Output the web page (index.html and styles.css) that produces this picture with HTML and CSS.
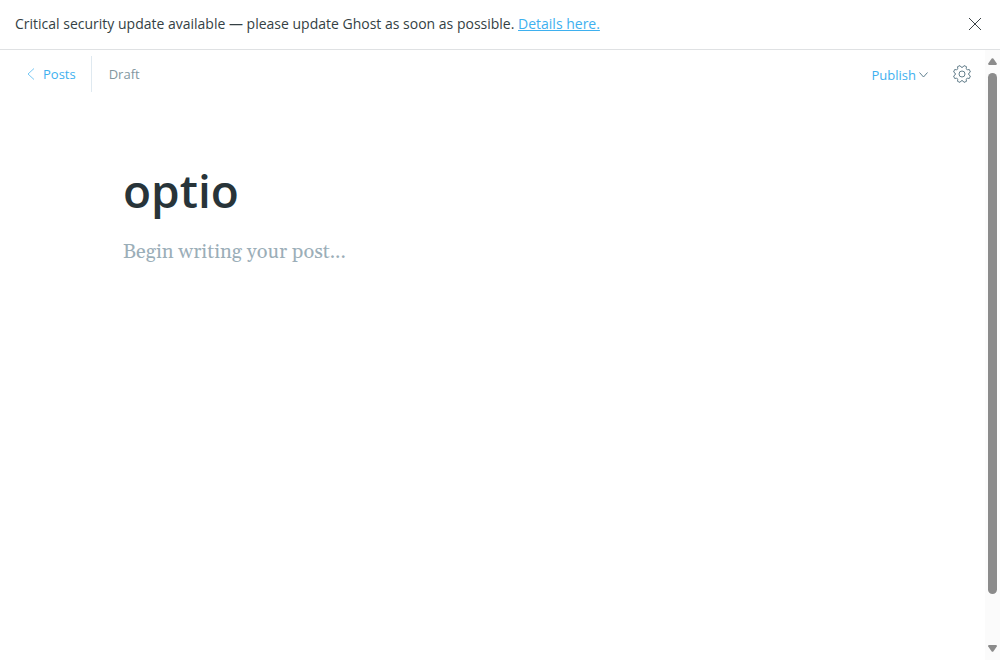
FILE: index.html
```html
<!DOCTYPE html>
<html lang="en">
<head>
  <meta charset="utf-8">
  <title>Ghost editor</title>
  <link rel="stylesheet" href="styles.css">
</head>
<body>
  <aside class="alert">
    <p class="alert-text">Critical security update available — please update Ghost as soon as possible. <a class="alert-link" href="#">Details here.</a></p>
    <button class="icon-button" type="button" aria-label="Close">
      <svg width="14" height="14" viewBox="0 0 14 14" fill="none" stroke="#3c4347"><path d="M1 1l12 12M13 1L1 13"/></svg>
    </button>
  </aside>
  <div class="viewport">
    <main class="editor">
      <header class="toolbar">
        <a class="back" href="#">
          <svg width="8" height="12" viewBox="0 0 8 12" fill="none" stroke="#3eb0ef" stroke-width=".7"><path d="M7 .5L1 6l6 5.500"/></svg>
          Posts
        </a>
        <span class="status">Draft</span>
        <button class="publish" type="button">
          Publish
          <svg width="9" height="6" viewBox="0 0 9 6" fill="none" stroke="#4f7385" stroke-width=".9"><path d="M.5 .5l4 4.500 4-4.500"/></svg>
        </button>
        <button class="icon-button" type="button" aria-label="Settings">
          <svg width="18" height="18" viewBox="0 0 18 18" fill="none" stroke="#54717f" stroke-width=".9" stroke-linejoin="round"><circle cx="9" cy="9" r="3"/><path d="M11 .6L13.500 1.700Q12.300 5.700 16.300 4.500L17.400 7Q13.700 9 17.400 11L16.300 13.500Q12.300 12.300 13.500 16.300L11 17.400Q9 13.700 7 17.400L4.500 16.300Q5.700 12.300 1.700 13.500L.6 11Q4.300 9 .6 7L1.700 4.500Q5.700 5.700 4.500 1.700L7 .6Q9 4.300 11 .6Z"/></svg>
        </button>
      </header>
      <form class="post">
        <input class="post-title" type="text" aria-label="Post title" value="optio">
        <textarea class="post-body" aria-label="Post body" placeholder="Begin writing your post..."></textarea>
      </form>
    </main>
    <div class="scrollbar" aria-hidden="true">
      <svg width="9" height="7" viewBox="0 0 9 7" fill="#8b8b8b"><path d="M3.700 .6q.8-.9 1.600 0L8.800 5.500q.4 1.300-.8 1.500H1Q-.2 6.800.2 5.500z"/></svg>
      <div class="track"><div class="thumb"></div></div>
      <svg width="9" height="7" viewBox="0 0 9 7" fill="#8b8b8b"><path d="M3.700 6.400q.8.9 1.600 0L8.800 1.500Q9.200.2 8 0H1Q-.2.2.2 1.500z"/></svg>
    </div>
  </div>
</body>
</html>
```
FILE: styles.css
```css
* {
  box-sizing: border-box;
}

body {
  display: flex;
  flex-direction: column;
  min-height: 100vh;
  margin: 0;
  background: #fff;
  color: #343f44;
  font: 13px/20px "Segoe UI", "Open Sans", sans-serif;
}

a {
  color: #3eb0ef;
}

button {
  padding: 0;
  border: 0;
  background: none;
  font: inherit;
  cursor: pointer;
}

svg {
  display: block;
  flex: none;
}

.alert {
  display: flex;
  align-items: center;
  justify-content: space-between;
  padding: 14px 18px 15px 15px;
  border-bottom: 1px solid #dfe1e3;
}

.alert-text {
  margin: 0;
  font-size: 14px;
}

.icon-button {
  display: flex;
}

.viewport {
  display: flex;
  flex: 1;
}

.editor {
  flex: 1;
  min-width: 0;
}

.toolbar {
  display: flex;
  align-items: center;
  padding: 6px 14px 6px 27px;
}

.back {
  display: flex;
  align-items: center;
  gap: 8px;
  height: 36px;
  padding-right: 15px;
  border-right: 1px solid #dfe9f0;
  text-decoration: none;
}

.status {
  margin: 0 auto 0 17px;
  color: #83979f;
}

.publish {
  display: flex;
  align-items: center;
  gap: 3px;
  margin-right: 25px;
  padding-top: 2px;
  color: #3eb0ef;
}

.post {
  display: flex;
  flex-direction: column;
  padding: 60px 123px 0;
}

.post-title,
.post-body {
  width: 100%;
  padding: 0;
  border: 0;
  outline: 0;
  background: none;
}

.post-title {
  height: 64px;
  color: #283439;
  font: 600 46px/64px "Segoe UI", "Open Sans", sans-serif;
}

.post-body {
  height: 260px;
  margin-top: 14px;
  resize: none;
  color: #343f44;
  font: 20px/32px Georgia, Gelasio, "Liberation Serif", serif;
}

.post-body::placeholder {
  color: #9baeb8;
  opacity: 1;
}

.scrollbar {
  display: flex;
  flex-direction: column;
  align-items: center;
  gap: 8px;
  width: 15px;
  padding: 8px 0;
  background: #fbfbfb;
}

.track {
  display: flex;
  flex: 1;
  flex-direction: column;
  width: 9px;
  padding-bottom: 43px;
}

.thumb {
  flex: 1;
  border-radius: 5px;
  background: #8b8b8b;
}
```
